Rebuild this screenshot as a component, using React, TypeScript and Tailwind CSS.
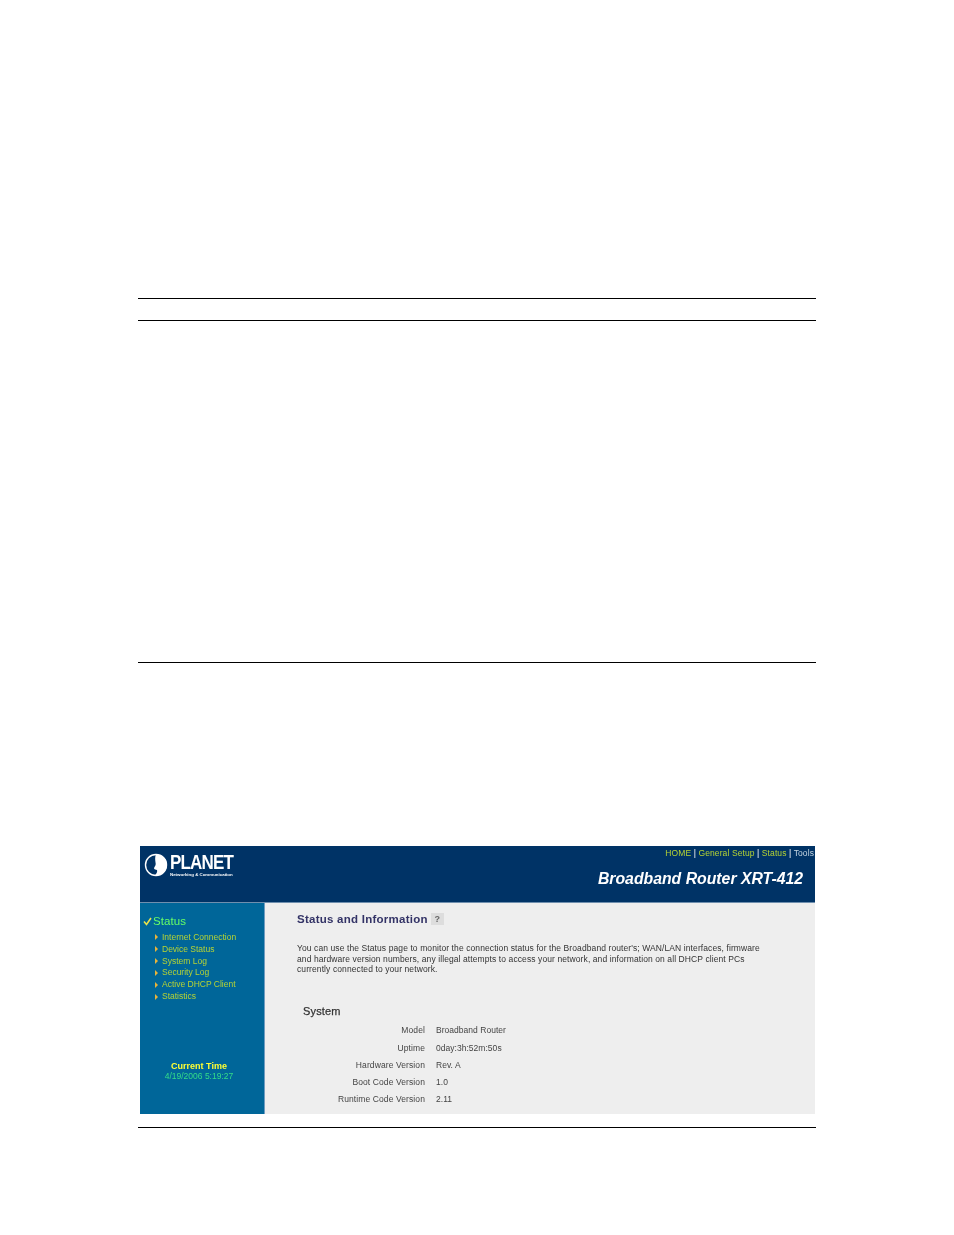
const navItems = [
  "Internet Connection",
  "Device Status",
  "System Log",
  "Security Log",
  "Active DHCP Client",
  "Statistics",
];

const systemRows = [
  ["Model", "Broadband Router"],
  ["Uptime", "0day:3h:52m:50s"],
  ["Hardware Version", "Rev. A"],
  ["Boot Code Version", "1.0"],
  ["Runtime Code Version", "2.11"],
];

function PlanetMark() {
  return (
    <svg width="24" height="24" viewBox="0 0 24 24" className="shrink-0">
      <circle cx="12" cy="12" r="10.5" fill="none" stroke="#ffffff" strokeWidth="1.4" />
      <path
        d="M12 1.500C19 1.500 23 6 23 12c0 6-4.500 10.500-12.500 10.500 2.500-2 3-4 2.500-5.500-3-.5-3.500-1.500-2.500-3 1-1.500 1.500-2.500 1-4.500-.5-3.500-.5-6 .5-8.500z"
        fill="#ffffff"
      />
    </svg>
  );
}

function RouterScreenshot() {
  return (
    <div className="ml-[2px] flex h-[268px] w-[675px] flex-col blur-[0.45px]">
      <header className="flex h-[56px] shrink-0 justify-between bg-[#003366]">
        <div className="flex items-start gap-[2px] pl-[4px] pt-[7px]">
          <PlanetMark />
          <div className="flex flex-col text-white">
            <span className="origin-top scale-y-[1.15] text-[17px] leading-[18px] font-bold tracking-[-0.8px] [font-family:'Liberation_Sans',sans-serif]">
              PLANET
            </span>
            <span className="mt-[1px] text-[4.4px] leading-[5px] font-bold [font-family:'Liberation_Sans',sans-serif]">
              Networking &amp; Communication
            </span>
          </div>
        </div>
        <div className="flex flex-col items-end pr-[1px]">
          <div className="pt-[1px] text-[8.500px] leading-[12px] tracking-[0.1px] text-[#b5d334] [font-family:'Liberation_Sans',sans-serif]">
            HOME <span className="text-white">|</span> General Setup{" "}
            <span className="text-white">|</span> Status{" "}
            <span className="text-white">|</span>{" "}
            <span className="text-[#c5d6e2]">Tools</span>
          </div>
          <div className="mr-[11px] mt-[11px] text-[15.800px] leading-[18px] font-bold italic text-white [font-family:'Liberation_Sans',sans-serif]">
            Broadband Router XRT-412
          </div>
        </div>
      </header>
      <div className="flex flex-1 border-t border-[#6f8fae]">
        <aside className="flex w-[124px] shrink-0 flex-col bg-[#006699] pl-[3px] pt-[11px]">
          <div className="flex items-center gap-[1px]">
            <svg width="9" height="9" viewBox="0 0 9 9">
              <path d="M1 4.500 3.500 7.500 8 1" fill="none" stroke="#e8e24a" strokeWidth="1.600" />
            </svg>
            <span className="text-[11.500px] leading-[14px] tracking-[0.1px] text-[#66ff66] [font-family:'Liberation_Sans',sans-serif]">
              Status
            </span>
          </div>
          <ul className="mt-[3.500px] flex flex-col pl-[12px]">
            {navItems.map((item) => (
              <li key={item} className="flex h-[11.850px] items-center gap-[4px]">
                <svg width="3" height="6" viewBox="0 0 3 6">
                  <path d="M0 0 3 3 0 6z" fill="#e8b33a" />
                </svg>
                <span className="text-[8.500px] leading-[11px] text-[#b5d334] [font-family:'Liberation_Sans',sans-serif]">
                  {item}
                </span>
              </li>
            ))}
          </ul>
          <div className="mt-auto mb-[33px] flex flex-col items-center pr-[9px] [font-family:'Liberation_Sans',sans-serif]">
            <span className="text-[9px] leading-[10px] font-bold text-[#ffff33]">Current Time</span>
            <span className="text-[8.500px] leading-[10px] text-[#33dd88]">4/19/2006 5:19:27</span>
          </div>
        </aside>
        <main className="flex-1 border-l border-[#6f9cc0] bg-[#eeeeee] pl-[32px] pt-[9px] [font-family:'Liberation_Sans',sans-serif]">
          <div className="flex items-center gap-[3px]">
            <h1 className="text-[11.500px] leading-[14px] font-bold tracking-[0.25px] text-[#333366]">
              Status and Information
            </h1>
            <span className="flex h-[12px] w-[13px] items-center justify-center bg-[#dddddd] text-[9px] leading-[12px] font-bold text-[#666666]">
              ?
            </span>
          </div>
          <p className="mt-[17px] text-[8.500px] leading-[10.700px] tracking-[0.095px] text-[#333333]">
            You can use the Status page to monitor the connection status for the Broadband router's; WAN/LAN interfaces, firmware
            <br />
            and hardware version numbers, any illegal attempts to access your network, and information on all DHCP client PCs
            <br />
            currently connected to your network.
          </p>
          <h2 className="ml-[6px] mt-[29px] text-[11px] leading-[14px] tracking-[0.15px] text-[#333333] [-webkit-text-stroke:0.25px_#333333]">
            System
          </h2>
          <dl className="mt-[4px] flex flex-col">
            {systemRows.map(([label, value]) => (
              <div key={label} className="flex h-[17.250px] items-center text-[8.500px] text-[#444444]">
                <dt className="w-[128px] text-right tracking-[0.1px]">{label}</dt>
                <dd className="ml-[11px] tracking-[0.03px]">{value}</dd>
              </div>
            ))}
          </dl>
        </main>
      </div>
    </div>
  );
}

export default function App() {
  return (
    <div className="h-[1235px] w-[954px] overflow-hidden bg-white pl-[138px] pt-[298px]">
      <div className="w-[678px]">
        <hr className="border-t border-black" />
        <hr className="mt-[21px] border-t border-black" />
        <hr className="mt-[341px] border-t border-black" />
        <div className="mt-[183px]">
          <RouterScreenshot />
        </div>
        <hr className="mt-[13px] border-t border-black" />
      </div>
    </div>
  );
}
